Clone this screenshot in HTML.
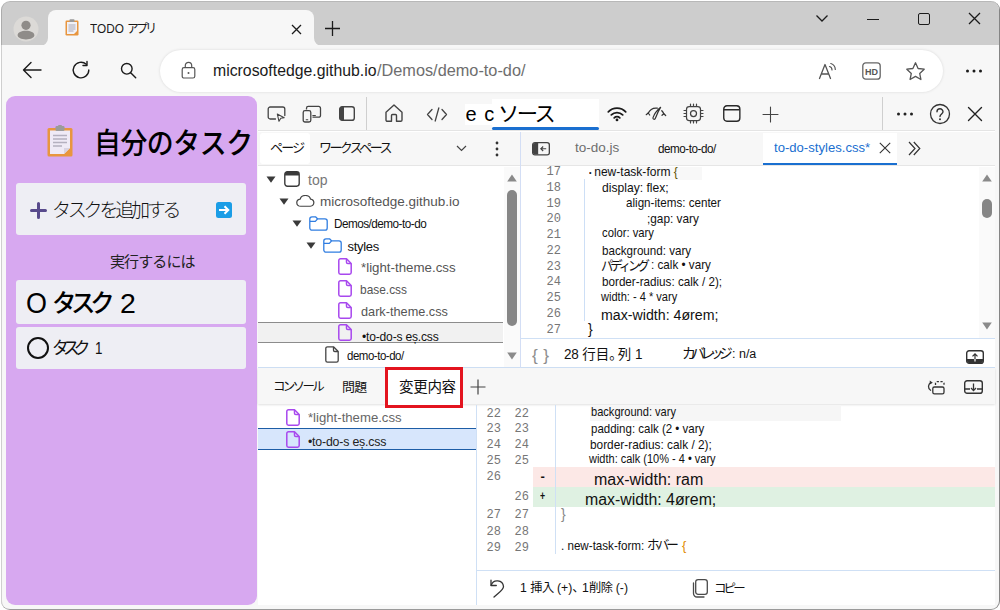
<!DOCTYPE html>
<html lang="ja">
<head>
<meta charset="utf-8">
<title>TODO アプリ</title>
<style>
*{box-sizing:border-box;margin:0;padding:0}
html,body{width:1000px;height:610px;overflow:hidden;background:#fff}
body{font-family:"Liberation Sans","Noto Sans CJK JP",sans-serif;color:#1b1b1b;position:relative}
.abs{position:absolute}
.t{position:absolute;white-space:nowrap;line-height:1}
#win{position:absolute;left:1px;top:1px;width:999px;height:609px;background:#f7f7f7;border-radius:9px 9px 9px 9px;overflow:hidden;border-right:1.500px solid #858585;border-bottom:1px solid #9a9a9a}
#titlebar{position:absolute;left:0;top:0;width:1000px;height:45px;background:#cdcdcd}
#tab{position:absolute;left:47px;top:9px;width:266px;height:37px;background:#f7f7f7;border-radius:8px 8px 0 0}
#toolbar{position:absolute;left:0;top:44px;width:1000px;height:51px;background:#f7f7f7}
#addr{position:absolute;left:159px;top:49px;width:783px;height:42px;border-radius:21px;background:#fff;box-shadow:0 0 3px rgba(0,0,0,0.130)}
#page{position:absolute;left:5px;top:95px;width:251px;height:509px;background:#d7a8f0;border-radius:9px;overflow:hidden}
#dt{position:absolute;left:257px;top:95px;width:737px;height:509px;background:#fff;overflow:hidden}
.ln{font-family:"Liberation Mono","DejaVu Sans Mono",monospace;font-size:12px;color:#767676;text-align:right}
.cd{color:#111}
</style>
</head>
<body>
<div id="win">
  <div id="titlebar"></div>
  <div id="tab"></div>
  <div id="toolbar"></div>
  <div id="addr"></div>

  <!-- avatar -->
  <svg class="abs" style="left:12px;top:15px" width="26" height="26" viewBox="0 0 26 26"><circle cx="13" cy="13" r="12.5" fill="#dcdad7"/><circle cx="13" cy="9.3" r="4.6" fill="#8f8c89"/><path d="M4.6 19.3c0-3 3.8-4.6 8.4-4.600s8.400 1.600 8.400 4.600c0 2.300-3.800 4.200-8.400 4.200s-8.400-1.900-8.400-4.200z" fill="#8f8c89"/></svg>
  <!-- tab curve corners -->
  <svg class="abs" style="left:39px;top:37px" width="8" height="8" viewBox="0 0 8 8"><path d="M8 0v8H0a8 8 0 0 0 8-8z" fill="#f7f7f7"/></svg>
  <svg class="abs" style="left:313px;top:37px" width="8" height="8" viewBox="0 0 8 8"><path d="M0 0v8h8a8 8 0 0 1-8-8z" fill="#f7f7f7"/></svg>
  <!-- clipboard favicon -->
  <svg class="abs" style="left:64px;top:18.200px" width="14" height="17" viewBox="0 0 14 17"><rect x="0.500" y="1.500" width="13" height="15" rx="1.200" fill="#e8963f"/><rect x="2" y="3" width="10" height="12" fill="#f1f1f6"/><rect x="4.500" y="0.300" width="5" height="2.800" rx="0.800" fill="#9a9a9a"/><path d="M3.500 6h7M3.500 8h7M3.500 10h7M3.500 12h5" stroke="#a9a9b8" stroke-width="1"/><path d="M12 12v3H9z" fill="#e8963f"/></svg>
  <div class="t" id="tabt" style="left:89px;top:21.5px;font-size:12.500px;color:#1a1a1a;transform-origin:0 0;transform:scaleX(0.942)">TODO <span style="letter-spacing:-2.800px">アプリ</span></div>
  <!-- tab close -->
  <svg class="abs" style="left:290px;top:23px" width="11" height="11" viewBox="0 0 11 11"><path d="M1 1l9 9M10 1l-9 9" stroke="#1b1b1b" stroke-width="1.300" fill="none"/></svg>
  <!-- new tab plus -->
  <svg class="abs" style="left:323px;top:19px" width="17" height="17" viewBox="0 0 17 17"><path d="M8.500 1v15M1 8.500h15" stroke="#1b1b1b" stroke-width="1.300" fill="none"/></svg>
  <!-- window controls -->
  <svg class="abs" style="left:814px;top:13px" width="14" height="9" viewBox="0 0 14 9"><path d="M1.500 1.500l5.500 5.500 5.500-5.500" stroke="#1b1b1b" stroke-width="1.300" fill="none"/></svg>
  <div class="abs" style="left:866px;top:17.500px;width:12px;height:1.300px;background:#1b1b1b"></div>
  <div class="abs" style="left:917px;top:12px;width:11.500px;height:11.500px;border:1.300px solid #1b1b1b;border-radius:2px"></div>
  <svg class="abs" style="left:967px;top:11px" width="13" height="13" viewBox="0 0 13 13"><path d="M1 1l11 11M12 1l-11 11" stroke="#1b1b1b" stroke-width="1.300" fill="none"/></svg>
  <!-- nav icons -->
  <svg class="abs" style="left:21px;top:60px" width="20" height="18" viewBox="0 0 20 18"><path d="M9 1.500L1.500 9 9 16.500M1.500 9H19" stroke="#1b1b1b" stroke-width="1.400" fill="none" stroke-linecap="round" stroke-linejoin="round"/></svg>
  <svg class="abs" style="left:70px;top:59px" width="20" height="20" viewBox="0 0 20 20"><path d="M17.800 10a7.800 7.800 0 1 1-2.500-5.700" stroke="#1b1b1b" stroke-width="1.400" fill="none" stroke-linecap="round"/><path d="M16 1.500v4h-4" stroke="#1b1b1b" stroke-width="1.400" fill="none" stroke-linecap="round" stroke-linejoin="round"/></svg>
  <svg class="abs" style="left:119px;top:61px" width="17" height="17" viewBox="0 0 17 17"><circle cx="6.800" cy="6.800" r="5.300" stroke="#1b1b1b" stroke-width="1.400" fill="none"/><path d="M10.700 10.700l5 5" stroke="#1b1b1b" stroke-width="1.400" stroke-linecap="round"/></svg>
  <!-- lock -->
  <svg class="abs" style="left:180px;top:60px" width="15" height="18" viewBox="0 0 15 18"><rect x="1.200" y="6.700" width="12.600" height="10.300" rx="1.800" stroke="#555" stroke-width="1.200" fill="none"/><path d="M4.300 6.700V4.500a3.200 3.200 0 0 1 6.400 0v2.200" stroke="#555" stroke-width="1.200" fill="none"/><circle cx="7.500" cy="11.900" r="1" fill="#555"/></svg>
  <div class="t" id="urla" style="left:212px;top:61px;font-size:16.5px;color:#1a1a1a;transform-origin:0 0;transform:scaleX(0.9582)">microsoftedge.github.io</div>
  <div class="t" id="urlb" style="left:376px;top:61px;font-size:16.5px;color:#6e6e6e;transform-origin:0 0;transform:scaleX(0.9872)">/Demos/demo-to-do/</div>
  <!-- read aloud A -->
  <svg class="abs" style="left:817px;top:60px" width="20" height="19" viewBox="0 0 20 19"><path d="M1.500 17.500L7 3.500l5.500 14M3.300 13h7.400" stroke="#555" stroke-width="1.300" fill="none" stroke-linejoin="round" stroke-linecap="round"/><path d="M11.500 5.500a3.500 3.500 0 0 1 2.500 3.500M12.800 2.500a6.500 6.500 0 0 1 4.500 6" stroke="#555" stroke-width="1.200" fill="none" stroke-linecap="round"/></svg>
  <!-- HD -->
  <svg class="abs" style="left:861px;top:61px" width="19" height="18" viewBox="0 0 19 18"><rect x="0.800" y="0.800" width="17.400" height="16.400" rx="3" stroke="#666" stroke-width="1.300" fill="none"/><text x="9.500" y="12.500" font-family="Liberation Sans, sans-serif" font-size="9" font-weight="bold" text-anchor="middle" fill="#555">HD</text></svg>
  <!-- star -->
  <svg class="abs" style="left:904px;top:60px" width="21" height="20" viewBox="0 0 21 20"><path d="M10.500 1.800l2.600 5.700 6.100.700-4.500 4.200 1.200 6.100-5.400-3.100-5.400 3.100 1.200-6.100L1.800 8.200l6.100-.700z" stroke="#555" stroke-width="1.300" fill="none" stroke-linejoin="round"/></svg>
  <!-- dots -->
  <svg class="abs" style="left:964px;top:68px" width="18" height="4" viewBox="0 0 18 4"><circle cx="2.500" cy="2" r="1.500" fill="#1b1b1b"/><circle cx="9" cy="2" r="1.500" fill="#1b1b1b"/><circle cx="15.500" cy="2" r="1.500" fill="#1b1b1b"/></svg>
  <div id="page">
    <!-- coordinates inside #page are relative to (6,96) absolute -->
    <svg class="abs" style="left:41px;top:29px" width="26" height="32" viewBox="0 0 26 32"><rect x="0.500" y="3" width="25" height="28.500" rx="1.500" fill="#e8963f"/><rect x="3" y="5.500" width="20" height="23.500" fill="#efeaf6"/><path d="M17 29l6-6v6z" fill="#e8963f"/><path d="M17 29v-6h6z" fill="#d9d3e2"/><rect x="8.500" y="1" width="9" height="5" rx="1.200" fill="#9b9b9b"/><rect x="11" y="0" width="4" height="2.500" rx="1" fill="#9b9b9b"/><path d="M6 10.500h14M6 14h14M6 17.500h14M6 21h9" stroke="#b4b0bf" stroke-width="1.400"/></svg>
    <div class="t" id="h1" style="left:87.6px;top:34px;font-size:29px;font-weight:500;color:#000;letter-spacing:-0.5px;transform-origin:0 0;transform:scaleX(0.9272)">自分のタスク</div>
    <div class="abs" style="left:10px;top:87px;width:230px;height:52px;background:#eeeef4;border-radius:3px"></div>
    <svg class="abs" style="left:24px;top:106px" width="17" height="17" viewBox="0 0 17 17"><path d="M8.500 1.500v14M1.500 8.500h14" stroke="#584a8c" stroke-width="3" stroke-linecap="round"/></svg>
    <div class="t" id="add" style="left:46px;top:105px;font-size:19px;font-weight:300;color:#111;letter-spacing:-3.200px">タスクを追加する</div>
    <svg class="abs" style="left:210px;top:106px" width="16" height="16" viewBox="0 0 16 16"><rect width="16" height="16" rx="2.500" fill="#1b9de6"/><path d="M3 8h9M8.500 4.200L12.300 8l-3.800 3.800" stroke="#fff" stroke-width="2" fill="none"/></svg>
    <div class="t" id="todo" style="left:104px;top:158px;font-size:15px;color:#222;letter-spacing:-0.900px">実行するには</div>
    <div class="abs" style="left:10px;top:184px;width:230px;height:44px;background:#eeeef4;border-radius:3px"></div>
    <div class="t" id="t2o" style="left:20.0px;top:193.0px;font-size:29px;color:#000;font-family:'Liberation Sans',sans-serif;transform-origin:0 0;transform:scaleX(0.9286)">O</div>
    <div class="t" id="t2" style="left:46px;top:195.05px;font-size:25px;font-weight:500;color:#000;letter-spacing:-5.500px;transform-origin:0 0;transform:scaleX(0.978)">タスク</div>
    <div class="t" id="t2n" style="left:114px;top:193px;font-size:28.500px;color:#000">2</div>
    <div class="abs" style="left:10px;top:231px;width:230px;height:42px;background:#eeeef4;border-radius:3px"></div>
    <div class="abs" style="left:21px;top:241px;width:22px;height:22px;border:2.200px solid #111;border-radius:50%"></div>
    <div class="t" id="t1" style="left:46px;top:244.35px;font-size:17.500px;font-weight:400;color:#111;letter-spacing:-6px;transform-origin:0 0;transform:scaleX(0.95)">タスク</div>
    <div class="t" id="t1n" style="left:89.3px;top:244.0px;font-size:16.500px;color:#111;transform-origin:0 0;transform:scaleX(0.8123)">1</div>
  </div>
  <div id="dt"></div>
  <div id="L" style="position:absolute;left:-1px;top:-1px;width:1000px;height:610px">
    <!-- devtools main toolbar -->
    <div class="abs" style="left:258px;top:96px;width:737px;height:35px;background:#f7f7f7;border-bottom:1px solid #e4e4e4"></div>
    <!-- inspect -->
    <svg class="abs" style="left:267px;top:106px" width="20" height="17" viewBox="0 0 20 17"><path d="M8.500 13H3.200a2 2 0 0 1-2-2V3a2 2 0 0 1 2-2h12.600a2 2 0 0 1 2 2v6.500" stroke="#444" stroke-width="1.300" fill="none" stroke-linecap="round"/><path d="M10.300 8l1.700 7.300 1.800-3 3.400-.600z" stroke="#444" stroke-width="1.100" fill="none" stroke-linejoin="round"/></svg>
    <!-- device -->
    <svg class="abs" style="left:302px;top:105px" width="20" height="18" viewBox="0 0 20 18"><path d="M4.500 4.500V3.200a1.800 1.800 0 0 1 1.800-1.800h10.400a1.800 1.800 0 0 1 1.800 1.800v7.200a1.800 1.800 0 0 1-1.800 1.800H10.500" stroke="#444" stroke-width="1.300" fill="none"/><rect x="1.200" y="5.600" width="7.600" height="11.400" rx="1.800" stroke="#444" stroke-width="1.300" fill="none"/><path d="M4.200 14.800h1.600M10.800 10.500h2.600" stroke="#444" stroke-width="1.100" stroke-linecap="round"/></svg>
    <!-- dock icon -->
    <svg class="abs" style="left:339px;top:106px" width="16" height="15" viewBox="0 0 16 15"><rect x="0.700" y="0.700" width="14.600" height="13.600" rx="2.400" stroke="#444" stroke-width="1.400" fill="none"/><path d="M.800 2.800a2 2 0 0 1 2-2h2.200v13.400H2.800a2 2 0 0 1-2-2z" fill="#444"/></svg>
    <div class="abs" style="left:366px;top:97px;width:1px;height:33px;background:#cfcfcf"></div>
    <!-- home -->
    <svg class="abs" style="left:384px;top:103px" width="20" height="20" viewBox="0 0 20 20"><path d="M2 9.200L10 2l8 7.200V17a1.300 1.300 0 0 1-1.300 1.300H12.500V12.500a1 1 0 0 0-1-1h-3a1 1 0 0 0-1 1v5.800H3.300A1.300 1.300 0 0 1 2 17z" stroke="#444" stroke-width="1.400" fill="none" stroke-linejoin="round"/></svg>
    <!-- code -->
    <svg class="abs" style="left:426px;top:107px" width="22" height="15" viewBox="0 0 22 15"><path d="M6 2.500L1.500 7.500 6 12.500M16 2.500l4.500 5-4.500 5M12.800 1L9.200 14" stroke="#444" stroke-width="1.300" fill="none" stroke-linecap="round" stroke-linejoin="round"/></svg>
    <!-- sources tab -->
    <div class="abs" style="left:465px;top:104px;width:28px;height:21px;background:#fff"></div>
    <div class="abs" style="left:492px;top:99px;width:107px;height:28px;background:#fff"></div>
    <div class="t" id="ec" style="left:465.500px;top:104px;font-size:20px;color:#000;font-family:'Liberation Sans',sans-serif;word-spacing:2px">e c</div>
    <div class="t" id="src" style="left:498.0px;top:103px;font-size:21px;color:#000;letter-spacing:-2.5px;transform-origin:0 0;transform:scaleX(1.0135)">ソース</div>
    <div class="abs" style="left:492px;top:126.500px;width:107px;height:3px;background:#1a6fd0;border-radius:1.500px"></div>
    <!-- wifi -->
    <svg class="abs" style="left:606.500px;top:106px" width="20" height="16" viewBox="0 0 20 16"><path d="M1.300 5.800a12.300 12.300 0 0 1 17.400 0M4.300 8.900a8.100 8.100 0 0 1 11.400 0M7.200 11.800a4 4 0 0 1 5.600 0" stroke="#1b1b1b" stroke-width="1.800" fill="none" stroke-linecap="round"/><circle cx="10" cy="13.900" r="1.400" fill="#1b1b1b"/></svg>
    <!-- performance -->
    <svg class="abs" style="left:644.500px;top:105.500px" width="22" height="15" viewBox="0 0 22 15"><path d="M3.200 7.300A8.800 8.800 0 0 1 12.300 2.200M16.800 4.800a8.800 8.800 0 0 1 2 3" stroke="#333" stroke-width="1.300" fill="none" stroke-linecap="round"/><path d="M1.200 8.700l2-1.700 1.500 2M17 9.300l1.800-1.600 1.900 1.800" stroke="#333" stroke-width="1.200" fill="none" stroke-linecap="round" stroke-linejoin="round"/><path d="M15.600 1.300C13.500 4.500 11.600 9 10.400 12.300 9.800 14 7.600 13.400 8 11.600 9.200 8.300 13 3.500 15.600 1.300z" stroke="#333" stroke-width="1.200" fill="none" stroke-linejoin="round"/></svg>
    <!-- memory chip -->
    <svg class="abs" style="left:683px;top:103px" width="21" height="21" viewBox="0 0 21 21"><rect x="3.500" y="3.500" width="14" height="14" rx="2.800" stroke="#444" stroke-width="1.250" fill="none"/><circle cx="10.500" cy="10.500" r="3" stroke="#444" stroke-width="1.250" fill="none"/><path d="M7.500 1v2.500M10.500 1v2.500M13.500 1v2.500M7.500 17.500V20M10.500 17.500V20M13.500 17.500V20M1 7.500h2.500M1 10.500h2.500M1 13.500h2.500M17.500 7.500H20M17.500 10.500H20M17.500 13.500H20" stroke="#444" stroke-width="1.200" stroke-linecap="round"/></svg>
    <!-- application -->
    <svg class="abs" style="left:723.300px;top:105.300px" width="17.600" height="17" viewBox="0 0 19 18" preserveAspectRatio="none"><rect x="0.800" y="0.800" width="17.400" height="16.400" rx="3.400" stroke="#2a2a2a" stroke-width="1.500" fill="none"/><path d="M1 5h17" stroke="#2a2a2a" stroke-width="1.500"/></svg>
    <!-- plus -->
    <svg class="abs" style="left:762px;top:105.500px" width="17" height="17" viewBox="0 0 17 17"><path d="M8.500 1v15M1 8.500h15" stroke="#444" stroke-width="1.100" stroke-linecap="round"/></svg>
    <div class="abs" style="left:882px;top:97px;width:1px;height:33px;background:#cfcfcf"></div>
    <svg class="abs" style="left:896px;top:112px" width="18" height="4" viewBox="0 0 18 4"><circle cx="2.500" cy="2" r="1.500" fill="#222"/><circle cx="9" cy="2" r="1.500" fill="#222"/><circle cx="15.500" cy="2" r="1.500" fill="#222"/></svg>
    <svg class="abs" style="left:929px;top:103px" width="22" height="22" viewBox="0 0 22 22"><circle cx="11" cy="11" r="9.500" stroke="#333" stroke-width="1.300" fill="none"/><path d="M8 8.800a3 3 0 0 1 6 0c0 2-3 2.300-3 4.700" stroke="#333" stroke-width="1.400" fill="none" stroke-linecap="round"/><circle cx="11" cy="16.300" r="1" fill="#333"/></svg>
    <svg class="abs" style="left:967px;top:106px" width="16" height="16" viewBox="0 0 16 16"><path d="M1.500 1.500l13 13M14.500 1.500l-13 13" stroke="#222" stroke-width="1.400" stroke-linecap="round"/></svg>
    <!-- navigator tab row -->
    <div class="abs" style="left:258px;top:132px;width:263px;height:34px;background:#f7f7f7;border-bottom:1px solid #e6e6e6"></div>
    <div class="abs" style="left:260px;top:133px;width:50px;height:31px;background:#fff;border-radius:3px"></div>
    <div class="t" id="pg" style="left:270px;top:141.4px;font-size:13px;color:#111;letter-spacing:-1.800px">ページ</div>
    <div class="t" id="ws" style="left:319px;top:141.4px;font-size:13px;color:#111;letter-spacing:-2.600px">ワークスペース</div>
    <svg class="abs" style="left:456px;top:145px" width="11" height="7" viewBox="0 0 11 7"><path d="M1 1l4.500 4.500L10 1" stroke="#444" stroke-width="1.200" fill="none"/></svg>
    <svg class="abs" style="left:495px;top:141px" width="4" height="16" viewBox="0 0 4 16"><circle cx="2" cy="2" r="1.400" fill="#333"/><circle cx="2" cy="8" r="1.400" fill="#333"/><circle cx="2" cy="14" r="1.400" fill="#333"/></svg>
    <!-- tree -->
    <svg class="abs" style="left:266px;top:176px" width="10" height="7" viewBox="0 0 10 7"><path d="M0.500 0.500h9L5 6.800z" fill="#3a3a3a"/></svg>
    <svg class="abs" style="left:284px;top:171px" width="16" height="16" viewBox="0 0 16 16"><rect x="0.800" y="0.800" width="14.400" height="14.400" rx="2.600" stroke="#3a3a3a" stroke-width="1.400" fill="none"/><path d="M1 2.800a2 2 0 0 1 2-2h10a2 2 0 0 1 2 2v1.700H1z" fill="#3a3a3a"/></svg>
    <div class="t" id="r1" style="left:308px;top:173.0px;font-size:14px;color:#777">top</div>
    <svg class="abs" style="left:279px;top:198px" width="10" height="7" viewBox="0 0 10 7"><path d="M0.500 0.500h9L5 6.800z" fill="#3a3a3a"/></svg>
    <svg class="abs" style="left:295.500px;top:195px" width="19" height="12" viewBox="0 0 20 14" preserveAspectRatio="none"><path d="M5 13.200a4.200 4.200 0 0 1-.600-8.350A5.600 5.600 0 0 1 15.300 4.800 4.250 4.250 0 0 1 15 13.200z" stroke="#444" stroke-width="1.300" fill="none" stroke-linejoin="round"/></svg>
    <div class="t" id="r2" style="left:320.0px;top:195.25px;font-size:13.5px;color:#555">microsoftedge.github.io</div>
    <svg class="abs" style="left:292px;top:220px" width="10" height="7" viewBox="0 0 10 7"><path d="M0.500 0.500h9L5 6.800z" fill="#3a3a3a"/></svg>
    <svg class="abs" style="left:309px;top:215.5px" width="19" height="15" viewBox="0 0 19 15"><path d="M.800 3A2.200 2.200 0 0 1 3 .800H6.500L8.500 2.800H16A2.200 2.200 0 0 1 18.200 5V12A2.200 2.200 0 0 1 16 14.200H3A2.200 2.200 0 0 1 .800 12z" stroke="#2f7de1" stroke-width="1.300" fill="none" stroke-linejoin="round"/><path d="M1 5.300H6.300L8.500 3" stroke="#2f7de1" stroke-width="1.200" fill="none"/></svg>
    <div class="t" id="r3" style="left:334.0px;top:218.0px;font-size:12.500px;color:#111;letter-spacing:-0.550px;transform-origin:0 0;transform:scaleX(0.9388)">Demos/demo-to-do</div>
    <svg class="abs" style="left:305.5px;top:242px" width="10" height="7" viewBox="0 0 10 7"><path d="M0.500 0.500h9L5 6.800z" fill="#3a3a3a"/></svg>
    <svg class="abs" style="left:322.5px;top:237.5px" width="19" height="15" viewBox="0 0 19 15"><path d="M.800 3A2.200 2.200 0 0 1 3 .800H6.500L8.500 2.800H16A2.200 2.200 0 0 1 18.200 5V12A2.200 2.200 0 0 1 16 14.200H3A2.200 2.200 0 0 1 .800 12z" stroke="#2f7de1" stroke-width="1.300" fill="none" stroke-linejoin="round"/><path d="M1 5.300H6.300L8.500 3" stroke="#2f7de1" stroke-width="1.200" fill="none"/></svg>
    <div class="t" id="r4" style="left:347.500px;top:240.2px;font-size:13px;color:#111;letter-spacing:-0.300px">styles</div>
    <svg class="abs" style="left:338px;top:258px" width="14" height="17" viewBox="0 0 14 17"><path d="M2.500 0.800H8.500L13.200 5.500V14.500a1.700 1.700 0 0 1-1.700 1.700H2.500A1.700 1.700 0 0 1 .800 14.500V2.500A1.700 1.700 0 0 1 2.500 .800z" stroke="#a848ee" stroke-width="1.500" fill="none" stroke-linejoin="round"/><path d="M8.500 1v3.200a1.300 1.300 0 0 0 1.300 1.300H13" stroke="#a848ee" stroke-width="1.500" fill="none"/></svg>
    <div class="t" id="r5" style="left:361px;top:261.0px;font-size:13.3px;color:#555">*light-theme.css</div>
    <svg class="abs" style="left:338px;top:280px" width="14" height="17" viewBox="0 0 14 17"><path d="M2.500 0.800H8.500L13.200 5.500V14.500a1.700 1.700 0 0 1-1.700 1.700H2.500A1.700 1.700 0 0 1 .800 14.500V2.500A1.700 1.700 0 0 1 2.500 .800z" stroke="#a848ee" stroke-width="1.500" fill="none" stroke-linejoin="round"/><path d="M8.500 1v3.200a1.300 1.300 0 0 0 1.300 1.300H13" stroke="#a848ee" stroke-width="1.500" fill="none"/></svg>
    <div class="t" id="r6" style="left:360.0px;top:283.0px;font-size:13.3px;color:#555;transform-origin:0 0;transform:scaleX(0.8961)">base.css</div>
    <svg class="abs" style="left:338px;top:301.5px" width="14" height="17" viewBox="0 0 14 17"><path d="M2.500 0.800H8.500L13.200 5.500V14.500a1.700 1.700 0 0 1-1.700 1.700H2.500A1.700 1.700 0 0 1 .800 14.500V2.500A1.700 1.700 0 0 1 2.500 .800z" stroke="#a848ee" stroke-width="1.500" fill="none" stroke-linejoin="round"/><path d="M8.500 1v3.200a1.300 1.300 0 0 0 1.300 1.300H13" stroke="#a848ee" stroke-width="1.500" fill="none"/></svg>
    <div class="t" id="r7" style="left:361px;top:305.0px;font-size:13.3px;color:#555;transform-origin:0 0;transform:scaleX(0.956)">dark-theme.css</div>
    <div class="abs" style="left:258px;top:322px;width:245px;height:21px;background:#f1f1f1;border-top:1.500px solid #8c8c8c;border-bottom:1.500px solid #8c8c8c"></div>
    <svg class="abs" style="left:338px;top:324px" width="14" height="17" viewBox="0 0 14 17"><path d="M2.500 0.800H8.500L13.200 5.500V14.500a1.700 1.700 0 0 1-1.700 1.700H2.500A1.700 1.700 0 0 1 .800 14.500V2.500A1.700 1.700 0 0 1 2.500 .800z" stroke="#a848ee" stroke-width="1.500" fill="none" stroke-linejoin="round"/><path d="M8.500 1v3.200a1.300 1.300 0 0 0 1.300 1.300H13" stroke="#a848ee" stroke-width="1.500" fill="none"/></svg>
    <div class="t" id="r8" style="left:361.6px;top:330.75px;font-size:12.5px;color:#111;letter-spacing:-0.200px;transform-origin:0 0;transform:scaleX(0.9671)">•to-do-s eș.css</div>
    <svg class="abs" style="left:324.5px;top:346px" width="14" height="17" viewBox="0 0 14 17"><path d="M2.500 0.800H8.500L13.200 5.500V14.500a1.700 1.700 0 0 1-1.700 1.700H2.500A1.700 1.700 0 0 1 .800 14.500V2.500A1.700 1.700 0 0 1 2.500 .800z" stroke="#444" stroke-width="1.300" fill="none" stroke-linejoin="round"/><path d="M8.500 1v3.200a1.300 1.300 0 0 0 1.300 1.300H13" stroke="#444" stroke-width="1.300" fill="none"/></svg>
    <div class="t" id="r9" style="left:347px;top:350.2px;font-size:12.500px;color:#111;letter-spacing:-0.500px;transform-origin:0 0;transform:scaleX(0.9159)">demo-to-do/</div>
    <!-- nav scrollbar -->
    <div class="abs" style="left:504px;top:167px;width:17px;height:200px;background:#fafafa"></div>
    <svg class="abs" style="left:507px;top:174px" width="10" height="8" viewBox="0 0 10 8"><path d="M5 .500L9.800 7.500H.200z" fill="#8a8a8a"/></svg>
    <div class="abs" style="left:506.500px;top:190.400px;width:10px;height:136px;background:#868686;border-radius:5px"></div>
    <svg class="abs" style="left:507px;top:351.500px" width="10" height="8" viewBox="0 0 10 8"><path d="M5 7.500L9.800 .500H.200z" fill="#8a8a8a"/></svg>
    <!-- vertical divider nav/editor -->
    <div class="abs" style="left:520px;top:132px;width:1px;height:236px;background:#d3def5;z-index:2"></div>
    <!-- editor tab row -->
    <div class="abs" style="left:521px;top:132px;width:474px;height:34px;background:#f7f7f7;border-bottom:1px solid #e6e6e6"></div>
    <svg class="abs" style="left:531.800px;top:142.200px" width="18" height="13.500" viewBox="0 0 19 15" preserveAspectRatio="none"><rect x="0.700" y="0.700" width="17.600" height="13.600" rx="2.400" stroke="#444" stroke-width="1.400" fill="none"/><path d="M1 3a2 2 0 0 1 2-2h3.500v13H3a2 2 0 0 1-2-2z" fill="#444"/><path d="M15 7.500H9.500M11.800 5L9.300 7.500l2.500 2.500" stroke="#444" stroke-width="1.200" fill="none"/></svg>
    <div class="t" id="e1" style="left:575px;top:141px;font-size:13.500px;color:#6e6e6e">to-do.js</div>
    <div class="t" id="e2" style="left:658px;top:143.0px;font-size:12.500px;color:#111;letter-spacing:-0.500px;transform-origin:0 0;transform:scaleX(0.9333)">demo-to-do/</div>
    <div class="abs" style="left:763px;top:133px;width:134px;height:31.500px;background:#fff;border-bottom:2px solid #1a6fd0"></div>
    <div class="t" id="e3" style="left:773.500px;top:141px;font-size:13.3px;color:#1a6fd0;transform-origin:0 0;transform:scaleX(0.9856)">to-do-styles.css*</div>
    <svg class="abs" style="left:879.300px;top:142.300px" width="12" height="12" viewBox="0 0 12 12"><path d="M.800 .800l10.400 10.400M11.200 .800L.800 11.200" stroke="#333" stroke-width="1.100"/></svg>
    <svg class="abs" style="left:908px;top:140.500px" width="13" height="15" viewBox="0 0 13 15"><path d="M1 1l6 6.500L1 14M5.800 1L11.800 7.500 5.800 14" stroke="#333" stroke-width="1.200" fill="none"/></svg>
    <!-- editor -->
    <div class="abs" style="left:979px;top:167px;width:16px;height:171px;background:#fafafa"></div>
    <svg class="abs" style="left:981.500px;top:174px" width="10" height="8" viewBox="0 0 10 8"><path d="M5 .500L9.800 7.500H.200z" fill="#8a8a8a"/></svg>
    <div class="abs" style="left:982px;top:198.700px;width:10px;height:19px;background:#868686;border-radius:5px"></div>
    <svg class="abs" style="left:982px;top:321.500px" width="10" height="8" viewBox="0 0 10 8"><path d="M5 7.500L9.800 .500H.200z" fill="#8a8a8a"/></svg>
    <div class="abs" style="left:584px;top:179px;width:1px;height:142px;background:#cddff6"></div>
    <div class="abs" style="left:595px;top:167px;width:107px;height:13px;background:#f8f8f8"></div>
    <div class="t ln" style="left:540px;top:166.0px;width:21px">17</div>
    <div class="t ln" style="left:540px;top:181.8px;width:21px">18</div>
    <div class="t ln" style="left:540px;top:197.5px;width:21px">19</div>
    <div class="t ln" style="left:540px;top:213.2px;width:21px">20</div>
    <div class="t ln" style="left:540px;top:229.0px;width:21px">21</div>
    <div class="t ln" style="left:540px;top:244.8px;width:21px">22</div>
    <div class="t ln" style="left:540px;top:260.5px;width:21px">23</div>
    <div class="t ln" style="left:540px;top:276.2px;width:21px">24</div>
    <div class="t ln" style="left:540px;top:292.0px;width:21px">25</div>
    <div class="t ln" style="left:540px;top:307.8px;width:21px">26</div>
    <div class="t ln" style="left:540px;top:323.5px;width:21px">27</div>
    <div class="t cd" id="c17" style="left:589.0px;top:165.27px;font-size:13.5px;letter-spacing:0px;transform-origin:0 0;transform:scaleX(0.892)"><span style="font-size:8px;vertical-align:1px;margin-right:3px">•</span>new-task-form <span style="color:#5f5200">{</span></div>
    <div class="t cd" id="c18" style="left:602px;top:180.97px;font-size:13.5px;letter-spacing:0px;transform-origin:0 0;transform:scaleX(0.8973)">display: flex;</div>
    <div class="t cd" id="c19" style="left:626px;top:196.07px;font-size:13.5px;letter-spacing:0px;transform-origin:0 0;transform:scaleX(0.8609)">align-items: center</div>
    <div class="t cd" id="c20" style="left:647.2px;top:212.27px;font-size:13.5px;letter-spacing:0px;transform-origin:0 0;transform:scaleX(0.8748)">;gap: vary</div>
    <div class="t cd" id="c21" style="left:602px;top:225.87px;font-size:13.5px;letter-spacing:0px;transform-origin:0 0;transform:scaleX(0.8339)">color: vary</div>
    <div class="t cd" id="c22" style="left:602.0px;top:244.07px;font-size:13.5px;letter-spacing:0px;transform-origin:0 0;transform:scaleX(0.8612)">background: vary</div>
    <div class="t cd" id="c23a" style="left:601.0px;top:259px;font-size:13px;letter-spacing:-3.200px;font-weight:400;transform-origin:0 0;transform:scaleX(0.952)">パディング</div>
    <div class="t cd" id="c23b" style="left:651.4px;top:258.27px;font-size:13.500px;transform-origin:0 0;transform:scaleX(0.8647)">: calk • vary</div>
    <div class="t cd" id="c24" style="left:601.5px;top:275.07px;font-size:13.5px;letter-spacing:0px;transform-origin:0 0;transform:scaleX(0.865)">border-radius: calk / 2);</div>
    <div class="t cd" id="c25" style="left:601px;top:291.04px;font-size:12px;letter-spacing:0px;transform-origin:0 0;transform:scaleX(0.9217)">width: - 4 * vary</div>
    <div class="t cd" id="c26" style="left:600.5px;top:308.45px;font-size:14px;letter-spacing:0px;transform-origin:0 0;transform:scaleX(1.0135)">max-width: 4ørem;</div>
    <div class="t cd" id="c27" style="left:588px;top:321.8px;font-size:14px;letter-spacing:0px;">}</div>
    <!-- status bar -->
    <div class="abs" style="left:521px;top:337.500px;width:474px;height:1px;background:#cfe0f5"></div>
    <div class="abs" style="left:258px;top:367px;width:737px;height:1px;background:#cfe0f5"></div>
    <div class="t" id="s0" style="left:532.0px;top:347.7px;font-size:16px;color:#8e8e8e;letter-spacing:5px;transform-origin:0 0;transform:scaleX(1.08)">{}</div>
    <div class="t" id="s1" style="left:564.0px;top:347.0px;font-size:14px;color:#111;transform-origin:0 0;transform:scaleX(0.963)"><span style="letter-spacing:-0.300px">28</span> 行目<span style="letter-spacing:-5px">。</span>列 1</div>
    <div class="t" id="s2" style="left:682px;top:346px;font-size:14px;color:#111;font-weight:400"><span style="letter-spacing:-4.800px">カバレッジ</span><span style="font-size:12.500px;letter-spacing:0;font-weight:400;margin-left:4px">: n/a</span></div>
    <svg class="abs" style="left:966px;top:349.500px" width="18" height="14" viewBox="0 0 18 14"><rect x="0.700" y="0.700" width="16.600" height="12.600" rx="2.400" stroke="#333" stroke-width="1.400" fill="none"/><path d="M1 9h16v2a2 2 0 0 1-2 2H3a2 2 0 0 1-2-2z" fill="#333"/><path d="M6.500 6.300L9 3.800l2.500 2.500M9 4v5" stroke="#333" stroke-width="1.200" fill="none"/><path d="M9 11.500V9" stroke="#fff" stroke-width="1.200"/></svg>
    <!-- drawer tab row -->
    <div class="abs" style="left:258px;top:368px;width:737px;height:36px;background:#f7f7f7;box-shadow:0 1px 2px rgba(0,0,0,0.120)"></div>
    <div class="t" id="d1" style="left:273.0px;top:381.0px;font-size:12.500px;color:#111;letter-spacing:-2.700px;font-weight:400">コンソール</div>
    <div class="t" id="d2" style="left:342.2px;top:381.75px;font-size:12.500px;color:#111;letter-spacing:-0.700px;transform-origin:0 0;transform:scaleX(1.0348)">問題</div>
    <div class="abs" style="left:385px;top:366.500px;width:78px;height:41px;background:#fff;border:3px solid #e3141f"></div>
    <div class="t" id="d3" style="left:399.0px;top:380.35px;font-size:14.500px;color:#111;letter-spacing:-0.300px">変更内容</div>
    <svg class="abs" style="left:470px;top:379px" width="16" height="16" viewBox="0 0 16 16"><path d="M8 .500v15M.500 8h15" stroke="#444" stroke-width="1.200"/></svg>
    <svg class="abs" style="left:926px;top:379px" width="20" height="16" viewBox="0 0 20 16"><rect x="6.800" y="8" width="11.200" height="6.800" rx="1.600" stroke="#333" stroke-width="1.300" fill="none"/><path d="M9.500 6V4.200a1.600 1.600 0 0 1 1.600-1.600h5.300A1.600 1.600 0 0 1 18 4.200V6" stroke="#333" stroke-width="1.300" fill="none" stroke-dasharray="2.200 1.500"/><path d="M5 3.600A4.300 4.300 0 0 0 4.600 11.200" stroke="#333" stroke-width="1.300" fill="none" stroke-linecap="round"/><path d="M3.800 1.400L6.800 3.700 3.600 5.400z" fill="#333"/></svg>
    <svg class="abs" style="left:963.500px;top:380px" width="19" height="14" viewBox="0 0 19 14"><rect x="0.700" y="0.700" width="17.600" height="12.600" rx="2.400" stroke="#333" stroke-width="1.400" fill="none"/><path d="M1 9h5M13 9h5" stroke="#333" stroke-width="1.300"/><path d="M9.500 3.500v7M7 8l2.500 2.600L12 8" stroke="#333" stroke-width="1.300" fill="none"/></svg>
    <!-- changes list -->
    <svg class="abs" style="left:285.5px;top:409px" width="14" height="17" viewBox="0 0 14 17"><path d="M2.500 0.800H8.500L13.200 5.500V14.500a1.700 1.700 0 0 1-1.700 1.700H2.500A1.700 1.700 0 0 1 .800 14.500V2.500A1.700 1.700 0 0 1 2.500 .800z" stroke="#a848ee" stroke-width="1.500" fill="none" stroke-linejoin="round"/><path d="M8.500 1v3.200a1.300 1.300 0 0 0 1.300 1.300H13" stroke="#a848ee" stroke-width="1.500" fill="none"/></svg>
    <div class="t" id="l1" style="left:308px;top:410.7px;font-size:13.3px;color:#666;transform-origin:0 0;transform:scaleX(0.9894)">*light-theme.css</div>
    <div class="abs" style="left:258px;top:428px;width:218px;height:21.500px;background:#d7e6fc;border-top:1.300px solid #1d5da6;border-bottom:1.300px solid #1d5da6"></div>
    <svg class="abs" style="left:285.5px;top:431px" width="14" height="17" viewBox="0 0 14 17"><path d="M2.500 0.800H8.500L13.200 5.500V14.500a1.700 1.700 0 0 1-1.700 1.700H2.500A1.700 1.700 0 0 1 .800 14.500V2.500A1.700 1.700 0 0 1 2.500 .800z" stroke="#a848ee" stroke-width="1.500" fill="none" stroke-linejoin="round"/><path d="M8.500 1v3.200a1.300 1.300 0 0 0 1.300 1.300H13" stroke="#a848ee" stroke-width="1.500" fill="none"/></svg>
    <div class="t" id="l2" style="left:308px;top:435.5px;font-size:12.5px;color:#222;letter-spacing:-0.200px;transform-origin:0 0;transform:scaleX(0.9873)">•to-do-s eș.css</div>
    <div class="abs" style="left:476px;top:405px;width:1px;height:200px;background:#cfe0f5"></div>
    <!-- diff -->
    <div class="abs" style="left:590px;top:405px;width:251px;height:15.500px;background:#f6f6f6"></div>
    <div class="abs" style="left:532.500px;top:467px;width:462.500px;height:20px;background:#fce8e6"></div>
    <div class="abs" style="left:532.500px;top:487px;width:462.500px;height:19.500px;background:#dff1e2"></div>
    <div class="abs" style="left:555px;top:405px;width:1px;height:149px;background:#cfe0f5"></div>
    <div class="abs" style="left:476px;top:570px;width:519px;height:1px;background:#cfe0f5"></div>
    <div class="t ln" style="left:480px;top:407.5px;width:21px">22</div>
    <div class="t ln" style="left:508px;top:407.5px;width:21px">22</div>
    <div class="t ln" style="left:480px;top:423.0px;width:21px">23</div>
    <div class="t ln" style="left:508px;top:423.0px;width:21px">23</div>
    <div class="t ln" style="left:480px;top:439.0px;width:21px">24</div>
    <div class="t ln" style="left:508px;top:439.0px;width:21px">24</div>
    <div class="t ln" style="left:480px;top:455.0px;width:21px">25</div>
    <div class="t ln" style="left:508px;top:455.0px;width:21px">25</div>
    <div class="t ln" style="left:480px;top:470.5px;width:21px">26</div>
    <div class="t ln" style="left:508px;top:491.0px;width:21px">26</div>
    <div class="t ln" style="left:480px;top:509.0px;width:21px">27</div>
    <div class="t ln" style="left:508px;top:509.0px;width:21px">27</div>
    <div class="t ln" style="left:480px;top:525.5px;width:21px">28</div>
    <div class="t ln" style="left:508px;top:525.5px;width:21px">28</div>
    <div class="t ln" style="left:480px;top:541.5px;width:21px">29</div>
    <div class="t ln" style="left:508px;top:541.5px;width:21px">29</div>
    <div class="t cd" id="f22" style="left:590.5px;top:405.07px;font-size:13.5px;letter-spacing:0px;transform-origin:0 0;transform:scaleX(0.8204)">background: vary</div>
    <div class="t cd" id="f23" style="left:590.5px;top:422.17px;font-size:13.5px;letter-spacing:0px;transform-origin:0 0;transform:scaleX(0.8511)">padding: calk (2 • vary</div>
    <div class="t cd" id="f24" style="left:589.5px;top:438.27px;font-size:13.5px;letter-spacing:0px;transform-origin:0 0;transform:scaleX(0.8774)">border-radius: calk / 2);</div>
    <div class="t cd" id="f25" style="left:588.5px;top:453.12px;font-size:12.5px;letter-spacing:0px;transform-origin:0 0;transform:scaleX(0.8786)">width: calk (10% - 4 • vary</div>
    <div class="t cd" id="fm" style="left:540.5px;top:469.6px;font-size:13px;letter-spacing:0px;font-weight:bold;">-</div>
    <div class="t cd" id="f26a" style="left:594.0px;top:472.06px;font-size:16px;letter-spacing:0px;transform-origin:0 0;transform:scaleX(0.9989)">max-width: ram</div>
    <div class="t cd" id="fp" style="left:540.0px;top:489.65px;font-size:12px;letter-spacing:0px;font-weight:bold;transform-origin:0 0;transform:scaleX(0.7286)">+</div>
    <div class="t cd" id="f26b" style="left:584.5px;top:492.06px;font-size:16px;letter-spacing:0px;transform-origin:0 0;transform:scaleX(0.991)">max-width: 4ørem;</div>
    <div class="t cd" id="f27" style="left:561px;top:506.8px;font-size:14px;letter-spacing:0px;color:#888;">}</div>
    <div class="t cd" id="f29a" style="left:561.3px;top:538.600px;font-size:13px;transform-origin:0 0;transform:scaleX(0.8934)">. new-task-form:</div>
    <div class="t cd" id="f29b" style="left:647.1px;top:538px;font-size:13px;letter-spacing:-3px;transform-origin:0 0;transform:scaleX(0.9677)">ホバー</div>
    <div class="t cd" id="f29c" style="left:682px;top:538.600px;font-size:13px;color:#e08a00">{</div>
    <svg class="abs" style="left:489px;top:578px" width="16" height="20" viewBox="0 0 16 20"><path d="M2 2.200v5.300h5.300" stroke="#333" stroke-width="1.300" fill="none" stroke-linecap="round" stroke-linejoin="round"/><path d="M2.200 7.300A6.300 6.300 0 0 1 14.500 8.500c0 3.500-4 5.500-9.500 10.500" stroke="#333" stroke-width="1.300" fill="none" stroke-linecap="round"/></svg>
    <div class="t" id="b1" style="left:520.0px;top:582px;font-size:12.500px;color:#111;transform-origin:0 0;transform:scaleX(0.9771)">1 <span style="letter-spacing:-0.500px">挿入</span> (+)<span style="letter-spacing:-6px">、</span> 1<span style="letter-spacing:-0.500px">削除</span> (-)</div>
    <svg class="abs" style="left:692px;top:579px" width="16" height="19" viewBox="0 0 16 19"><rect x="3.700" y="0.700" width="11.600" height="14.600" rx="2.400" stroke="#4a4a4a" stroke-width="1.300" fill="none"/><path d="M1.500 4v10.500a3.500 3.500 0 0 0 3.500 3.500H12" stroke="#4a4a4a" stroke-width="1.300" fill="none" stroke-linecap="round"/></svg>
    <div class="t" id="b2" style="left:714.0px;top:583.0px;font-size:12.500px;color:#111;letter-spacing:-2.900px;font-weight:400">コピー</div>
  </div>
  <div class="abs" style="left:0;top:0;width:999px;height:609px;border-radius:9px;border-left:1px solid rgba(0,0,0,0.160);border-top:1px solid rgba(0,0,0,0.100);pointer-events:none"></div>
</div>
</body>
</html>
